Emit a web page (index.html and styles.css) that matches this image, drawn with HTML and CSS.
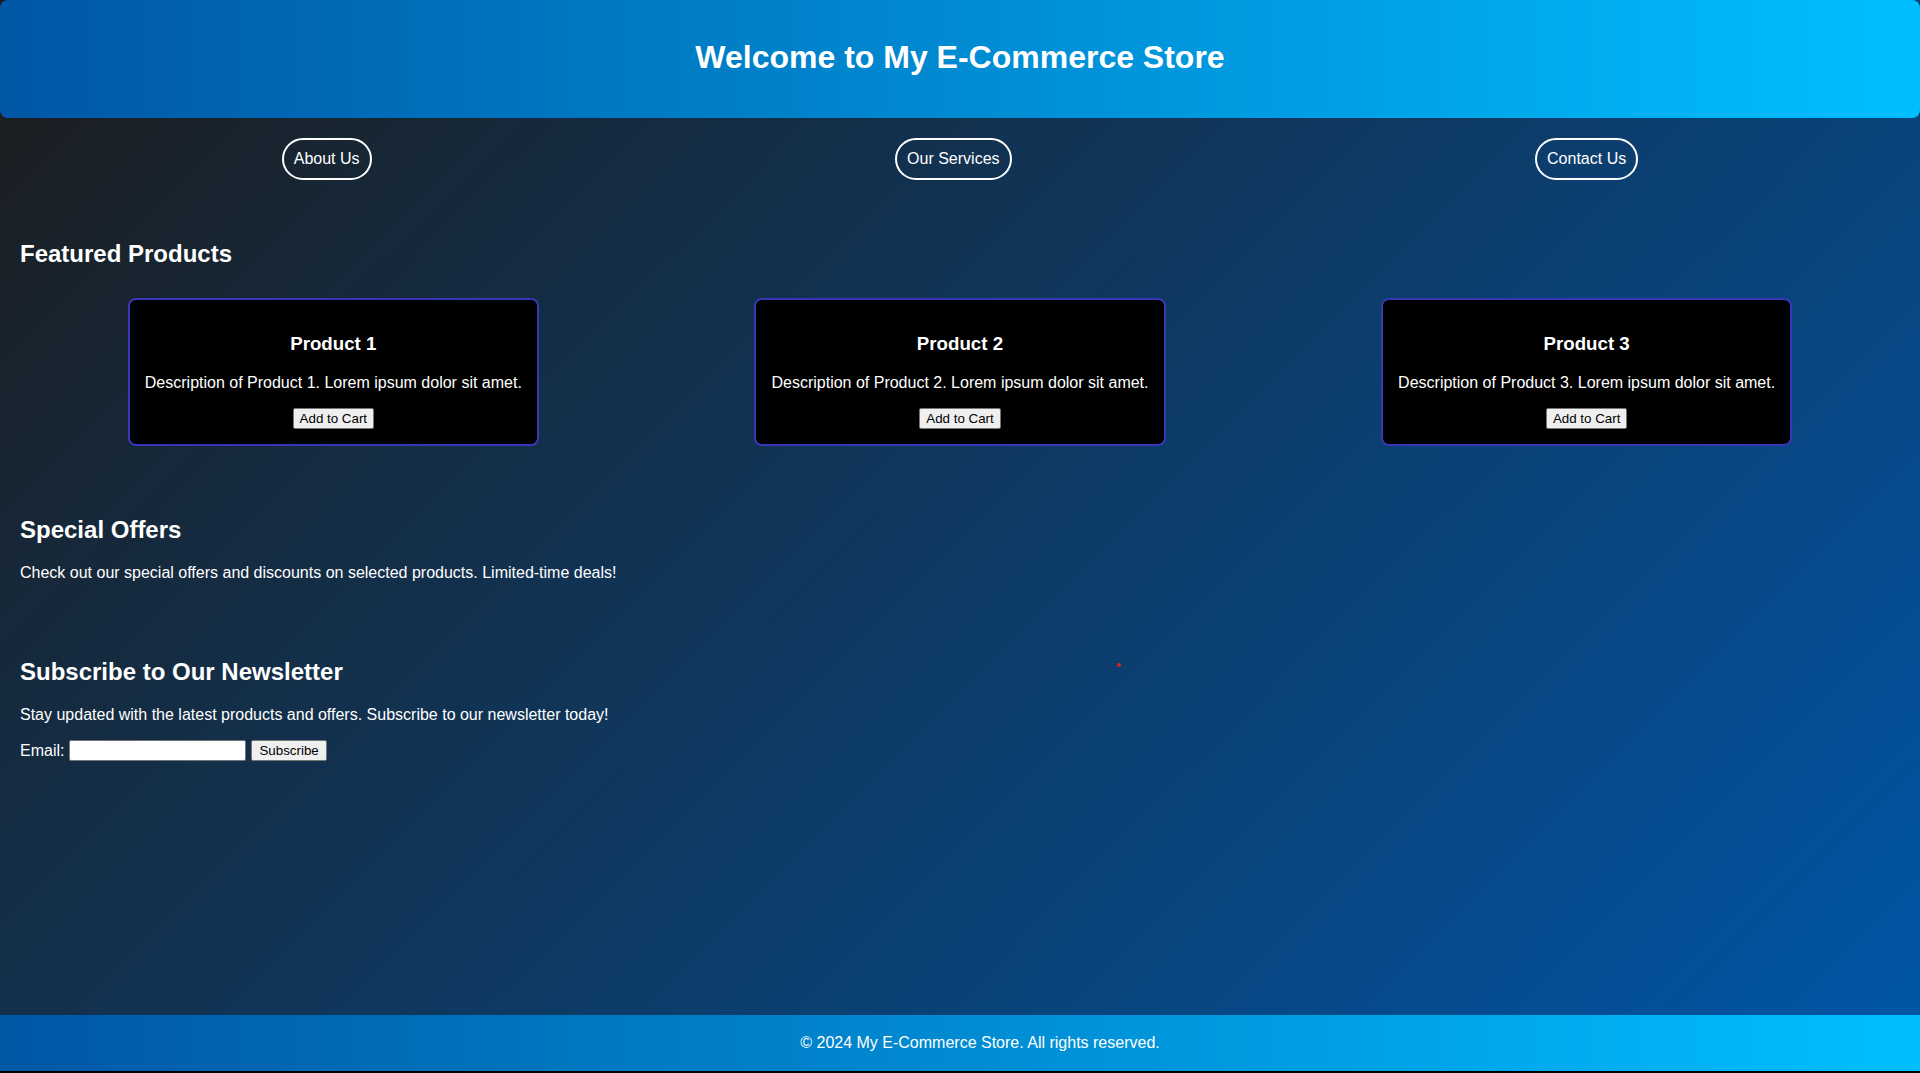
FILE: index.html
```html
<!DOCTYPE html>
<html lang="en">
<head>
<meta charset="UTF-8">
<title>My E-Commerce Store</title>
<link rel="stylesheet" href="styles.css">
</head>
<body>
<header class="site-header">
  <h1>Welcome to My E-Commerce Store</h1>
</header>
<nav class="site-nav">
  <a href="#" class="nav-link">About Us</a>
  <a href="#" class="nav-link">Our Services</a>
  <a href="#" class="nav-link">Contact Us</a>
</nav>
<main class="content">
  <section class="section">
    <h2>Featured Products</h2>
    <div class="products">
      <div class="product">
        <h3>Product 1</h3>
        <p>Description of Product 1. Lorem ipsum dolor sit amet.</p>
        <button class="btn">Add to Cart</button>
      </div>
      <div class="product">
        <h3>Product 2</h3>
        <p>Description of Product 2. Lorem ipsum dolor sit amet.</p>
        <button class="btn">Add to Cart</button>
      </div>
      <div class="product">
        <h3>Product 3</h3>
        <p>Description of Product 3. Lorem ipsum dolor sit amet.</p>
        <button class="btn">Add to Cart</button>
      </div>
    </div>
  </section>
  <section class="section">
    <h2>Special Offers</h2>
    <p>Check out our special offers and discounts on selected products. Limited-time deals!</p>
  </section>
  <section class="section">
    <h2>Subscribe to Our Newsletter</h2>
    <p>Stay updated with the latest products and offers. Subscribe to our newsletter today!</p>
    <form class="news-form">
      <label for="email">Email:</label>
      <input type="email" id="email" class="email-input">
      <button type="submit" class="btn btn-sub">Subscribe</button>
    </form>
  </section>
  <span class="dot"></span>
</main>
<footer class="site-footer">
  <p>&copy; 2024 My E-Commerce Store. All rights reserved.</p>
</footer>
</body>
</html>
```
FILE: styles.css
```css
html {
  background: #000;
}
body {
  margin: 0;
  min-height: calc(100vh - 2px);
  display: flex;
  flex-direction: column;
  font-family: "Liberation Sans", Arial, sans-serif;
  color: #fff;
  background: linear-gradient(135deg, #1c1c1c 0%, #0056a8 100%);
}
.site-header {
  height: 118px;
  box-sizing: border-box;
  padding-bottom: 4px;
  display: flex;
  align-items: center;
  justify-content: center;
  border-radius: 8px;
  background: linear-gradient(to right, #0057a6, #00bfff);
}
.site-header h1 {
  margin: 0;
  font-size: 32px;
  font-weight: bold;
}
.site-nav {
  display: flex;
  justify-content: space-around;
  padding: 20px;
}
.nav-link {
  color: #fff;
  text-decoration: none;
  font-size: 16px;
  line-height: 18px;
  padding: 10px 10px;
  border: 2px solid #fff;
  border-radius: 22px;
}
.content {
  flex: 1;
  position: relative;
}
.section {
  padding: 20px;
}
.section h2 {
  font-size: 24px;
  margin: 20px 0;
}
.section p {
  font-size: 16px;
  margin: 16px 0;
}
.products {
  display: flex;
  justify-content: space-around;
}
.product {
  margin: 10px 10px 10px;
  padding: 15px;
  background: #000;
  border: 2px solid #3a36b8;
  border-radius: 8px;
  text-align: center;
}
.product h3 {
  font-size: 18.72px;
  margin: 18px 0 19px;
}
.product p {
  margin: 16px 0;
}
.btn {
  font-family: "Liberation Sans", Arial, sans-serif;
  font-size: 13.33px;
  color: #000;
  background: #efefef;
  border: 1px solid #767676;
  border-radius: 2px;
  padding: 1px 6px;
  height: 21px;
}
.btn-sub {
  padding: 1px 7px;
}
.news-form {
  font-size: 16px;
  display: flex;
  align-items: center;
  gap: 5px;
}
.email-input {
  width: 177px;
  height: 21px;
  box-sizing: border-box;
  border: 1px solid #767676;
  border-radius: 2px;
  background: #fff;
}
.dot {
  position: absolute;
  left: 1117px;
  top: 463px;
  width: 4px;
  height: 4px;
  border-radius: 50%;
  background: #e0201e;
}
.site-footer {
  height: 56px;
  box-sizing: border-box;
  padding-left: 40px;
  display: flex;
  align-items: center;
  justify-content: center;
  background: linear-gradient(to right, #0057a6, #00bfff);
}
.site-footer p {
  margin: 0;
  font-size: 16px;
}
```
